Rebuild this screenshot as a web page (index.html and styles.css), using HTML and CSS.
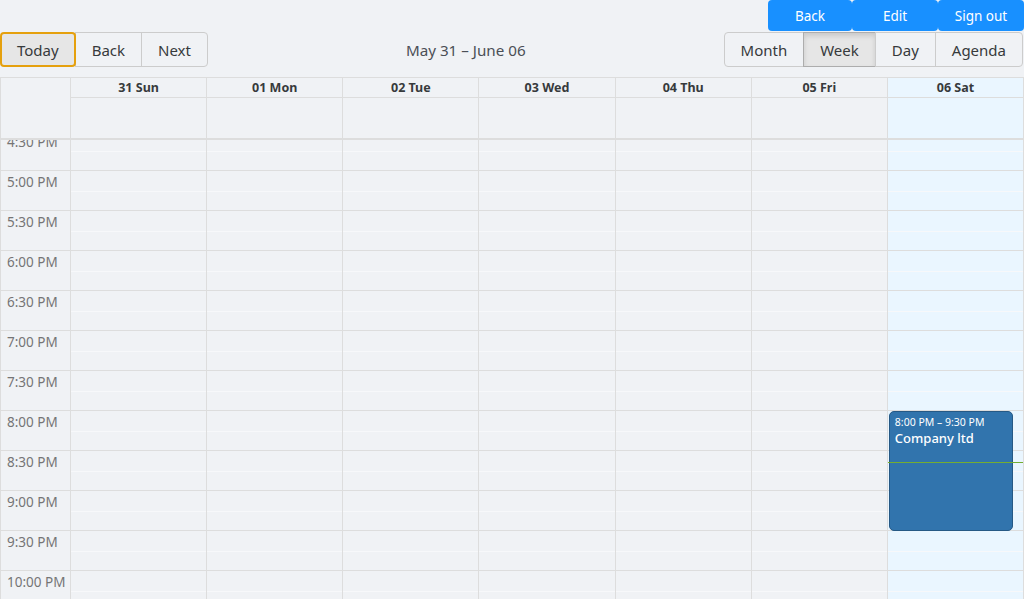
FILE: index.html
```html
<!DOCTYPE html>
<html>
<head>
<meta charset="utf-8">
<link rel="stylesheet" href="styles.css">
</head>
<body>
<div class="page">
  <div class="topbar">
    <button class="top-btn">Back</button>
    <button class="top-btn">Edit</button>
    <button class="top-btn">Sign out</button>
  </div>
  <div class="toolbar">
    <div class="btn-group">
      <button class="tb-btn today">Today</button>
      <button class="tb-btn">Back</button>
      <button class="tb-btn">Next</button>
    </div>
    <div class="toolbar-label">May 31 – June 06</div>
    <div class="btn-group">
      <button class="tb-btn">Month</button>
      <button class="tb-btn active">Week</button>
      <button class="tb-btn">Day</button>
      <button class="tb-btn">Agenda</button>
    </div>
  </div>
  <div class="timeview">
    <div class="header">
      <div class="gutter-head"></div>
      <div class="day-head"><div class="day-name">31 Sun</div><div class="allday"></div></div>
      <div class="day-head"><div class="day-name">01 Mon</div><div class="allday"></div></div>
      <div class="day-head"><div class="day-name">02 Tue</div><div class="allday"></div></div>
      <div class="day-head"><div class="day-name">03 Wed</div><div class="allday"></div></div>
      <div class="day-head"><div class="day-name">04 Thu</div><div class="allday"></div></div>
      <div class="day-head"><div class="day-name">05 Fri</div><div class="allday"></div></div>
      <div class="day-head today-col"><div class="day-name">06 Sat</div><div class="allday"></div></div>
    </div>
    <div class="content">
      <div class="content-inner">
        <div class="gutter">
          <div class="label">4:30 PM</div>
          <div class="label">5:00 PM</div>
          <div class="label">5:30 PM</div>
          <div class="label">6:00 PM</div>
          <div class="label">6:30 PM</div>
          <div class="label">7:00 PM</div>
          <div class="label">7:30 PM</div>
          <div class="label">8:00 PM</div>
          <div class="label">8:30 PM</div>
          <div class="label">9:00 PM</div>
          <div class="label">9:30 PM</div>
          <div class="label">10:00 PM</div>
          <div class="label">10:30 PM</div>
          <div class="label">11:00 PM</div>
        </div>
        <div class="day-col"></div>
        <div class="day-col"></div>
        <div class="day-col"></div>
        <div class="day-col"></div>
        <div class="day-col"></div>
        <div class="day-col"></div>
        <div class="day-col today-col">
          <div class="event">
            <div class="event-time">8:00 PM – 9:30 PM</div>
            <div class="event-title">Company ltd</div>
          </div>
          <div class="now-line"></div>
        </div>
      </div>
    </div>
  </div>
</div>
</body>
</html>
```

FILE: styles.css
```css
* { box-sizing: border-box; }
html, body {
  margin: 0;
  padding: 0;
  height: 100%;
  overflow: hidden;
  background: #f0f2f5;
  font-family: "Noto Sans", "Open Sans", sans-serif;
  color: #373a3c;
}
.page { display: flex; flex-direction: column; height: 599px; }

.topbar {
  display: flex;
  justify-content: flex-end;
  height: 31px;
}
.top-btn {
  width: 86px;
  height: 31px;
  border: none;
  border-radius: 4px;
  background: #1890ff;
  color: #fff;
  font-family: inherit;
  font-size: 13.5px;
  padding: 1px 0 0 0;
}
.top-btn:first-child { width: 84px; }

.toolbar {
  display: flex;
  align-items: center;
  margin-top: 1px;
  margin-bottom: 10px;
  padding-right: 1px;
}
.btn-group { display: flex; flex: none; }
.tb-btn {
  font-family: inherit;
  font-size: 15px;
  color: #373a3c;
  background: transparent;
  border: 1px solid #ccc;
  height: 35px;
  padding: 0 16px;
  margin: 0;
  border-radius: 0;
}
.tb-btn + .tb-btn { margin-left: -1px; }
.tb-btn:first-child { border-radius: 4px 0 0 4px; }
.tb-btn:last-child { border-radius: 0 4px 4px 0; }
.tb-btn.today {
  background: #e6e6e6;
  border: 2px solid #e5a00d;
  border-radius: 4px;
  padding: 0 15px;
  position: relative;
  z-index: 1;
}
.tb-btn.active {
  background: #e6e6e6;
  border-color: #adadad;
  box-shadow: inset 0 3px 5px rgba(0,0,0,0.125);
}
.toolbar-label {
  flex: 1;
  text-align: center;
  font-size: 15.2px;
  color: #4b4f56;
}

.timeview {
  flex: 1;
  border: 1px solid #ddd;
  border-bottom: none;
  display: flex;
  flex-direction: column;
  min-height: 0;
}
.header {
  display: grid;
  grid-template-columns: 69px repeat(7, 1fr);
  border-bottom: 2px solid #ddd;
}
.gutter-head { height: 60px; }
.day-head { border-left: 1px solid #ddd; }
.day-name {
  height: 20px;
  border-bottom: 1px solid #ddd;
  text-align: center;
  font-weight: 700;
  font-size: 12.5px;
  line-height: 19px;
  color: #373a3c;
}
.allday { height: 40px; }
.today-col { background: #eaf6ff; }

.content {
  flex: 1;
  overflow: hidden;
}
.content-inner {
  display: grid;
  grid-template-columns: 69px repeat(7, 1fr);
  margin-top: -9px;
}
.gutter .label {
  height: 40px;
  border-bottom: 1px solid #ddd;
  font-size: 13.5px;
  color: #757575;
  padding: 2px 0 0 6px;
}
.day-col {
  position: relative;
  border-left: 1px solid #ddd;
  height: 560px;
  background-image: repeating-linear-gradient(to bottom,
    transparent 0, transparent 20px,
    #f7f8fa 20px, #f7f8fa 21px,
    transparent 21px, transparent 39px,
    #ddd 39px, #ddd 40px);
}
.day-col.today-col {
  background-color: #eaf6ff;
}
.event {
  position: absolute;
  top: 280px;
  left: 1px;
  right: 10px;
  height: 120px;
  background: #3174ad;
  border: 1px solid #265985;
  border-radius: 5px;
  color: #fff;
  padding: 2px 5px;
}
.event-time { font-size: 10.5px; line-height: 16px; }
.event-title { font-size: 13px; font-weight: 500; line-height: 16px; }
.now-line {
  position: absolute;
  top: 331px;
  left: 0;
  right: 0;
  height: 1px;
  background: #74ad31;
}
```
